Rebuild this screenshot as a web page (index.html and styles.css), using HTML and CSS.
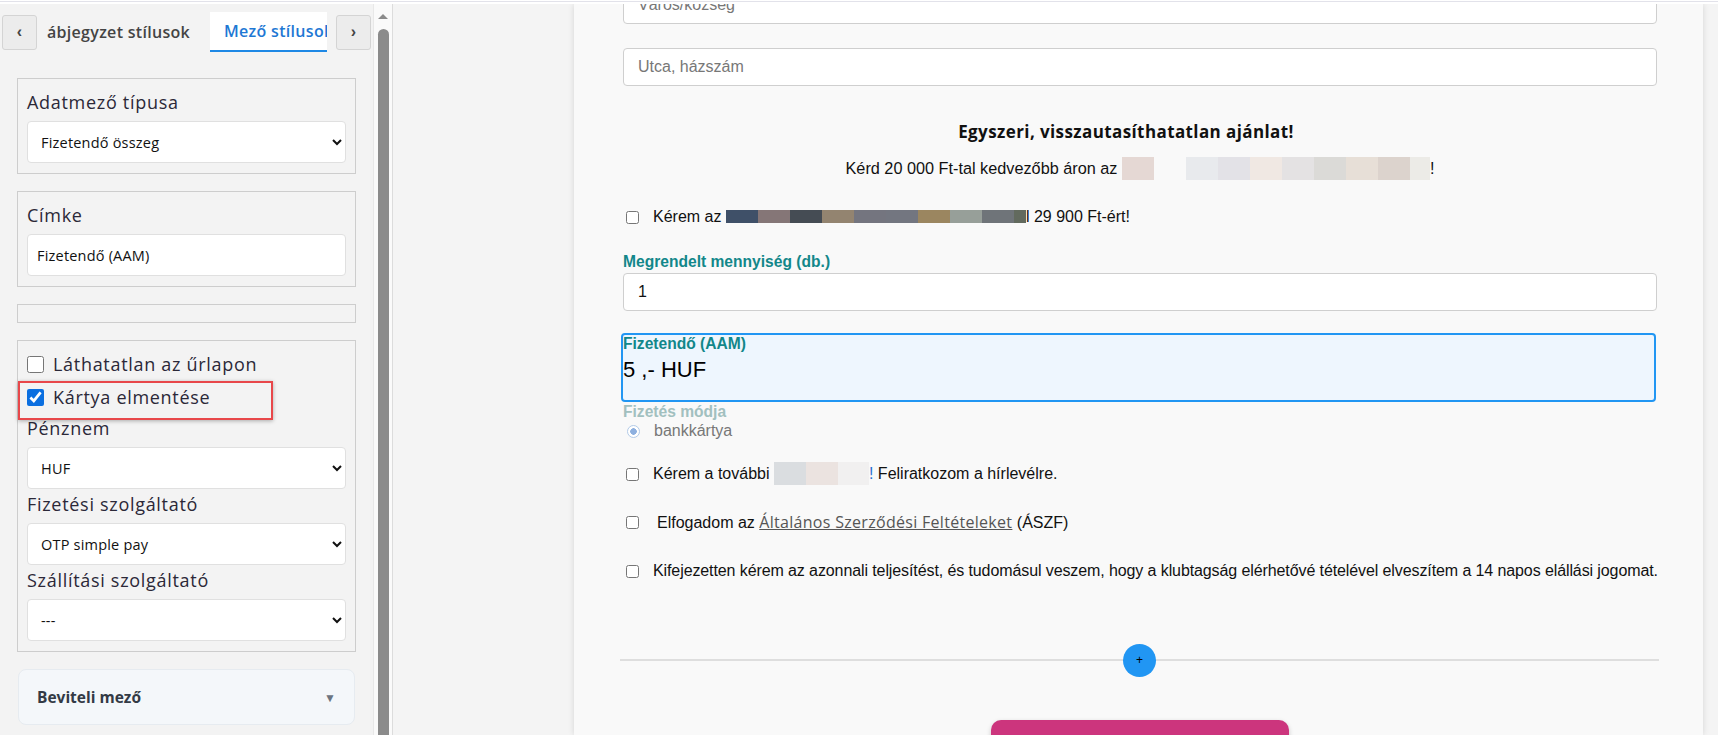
FILE: index.html
```html
<!DOCTYPE html>
<html lang="hu">
<head>
    <meta charset="UTF-8">
    <meta name="viewport" content="width=device-width, initial-scale=1.0">
    <title>Űrlap szerkesztő</title>
    <link rel="stylesheet" href="styles.css">
</head>
<body>

    <div class="topline"></div>

    <div class="app">
        <aside class="sidebar">
            <div class="sidebarInner">
                <div class="tabs">
                    <button class="tabArrow">‹</button>
                    <div class="tabViewport">
                        <div class="tab">ábjegyzet stílusok</div>
                        <div class="tab active">Mező stílusok</div>
                    </div>
                    <button class="tabArrow">›</button>
                </div>

                <div class="group">
                    <label class="groupLabel">Adatmező típusa</label>
                    <select class="control"><option>Fizetendő összeg</option></select>
                </div>

                <div class="group">
                    <label class="groupLabel">Címke</label>
                    <input class="control" type="text" value="Fizetendő (AAM)">
                </div>

                <div class="group empty"></div>

                <div class="group options">
                    <label class="checkRow"><input type="checkbox"> Láthatatlan az űrlapon</label>
                    <label class="checkRow"><input type="checkbox" checked> Kártya elmentése</label>
                    <div class="highlight"></div>

                    <label class="groupLabel">Pénznem</label>
                    <select class="control"><option>HUF</option></select>

                    <label class="groupLabel">Fizetési szolgáltató</label>
                    <select class="control"><option>OTP simple pay</option></select>

                    <label class="groupLabel">Szállítási szolgáltató</label>
                    <select class="control"><option>---</option></select>
                </div>

                <div class="accordion">
                    <span>Beviteli mező</span>
                    <span class="accordionArrow">▼</span>
                </div>
            </div>

            <div class="scrollbar">
                <span class="scrollUp"></span>
                <span class="scrollThumb"></span>
            </div>
        </aside>

        <main class="stage">
            <div class="card">
                <input class="field first" type="text" placeholder="Város/község">
                <input class="field" type="text" placeholder="Utca, házszám">

                <div class="offerTitle">Egyszeri, visszautasíthatatlan ajánlat!</div>
                <div class="offerText">
                    Kérd 20 000 Ft-tal kedvezőbb áron az
                    <span class="blur"><i style="background:#e5d8d4"></i><i style="background:#f9f9f9"></i><i style="background:#e8eaed"></i><i style="background:#e3e2e7"></i><i style="background:#f0e8e3"></i><i style="background:#e4e2e3"></i><i style="background:#dbdad7"></i><i style="background:#e7dfd7"></i><i style="background:#dcd3cd"></i><i style="background:#ecebe7;width:20px"></i></span>!
                </div>

                <label class="checkLine first">
                    <input type="checkbox">
                    <span>Kérem az <span class="blur thin"><i style="background:#3f5068"></i><i style="background:#857677"></i><i style="background:#454c54"></i><i style="background:#938470"></i><i style="background:#74757f"></i><i style="background:#737680"></i><i style="background:#9b8660"></i><i style="background:#979f99"></i><i style="background:#6f7479"></i><i style="background:#626a5e;width:12px"></i></span>l 29 900 Ft-ért!</span>
                </label>

                <div class="fieldLabel">Megrendelt mennyiség (db.)</div>
                <input class="field qty" type="text" value="1">

                <div class="amountBox">
                    <div class="fieldLabel">Fizetendő (AAM)</div>
                    <div class="amount">5 ,- HUF</div>
                </div>

                <div class="fieldLabel muted">Fizetés módja</div>
                <label class="radioLine"><input type="radio" checked> bankkártya</label>

                <label class="checkLine afterRadio">
                    <input type="checkbox">
                    <span>Kérem a további <span class="blur"><i style="background:#dadde0"></i><i style="background:#ebe3e0"></i><i style="background:#f1f0f0;width:31px"></i></span><span class="mark">!</span> Feliratkozom a hírlevélre.</span>
                </label>

                <label class="checkLine">
                    <input type="checkbox">
                    <span class="spaced">Elfogadom az <a href="#">Általános Szerződési Feltételeket</a> (ÁSZF)</span>
                </label>

                <label class="checkLine">
                    <input type="checkbox">
                    <span class="long">Kifejezetten kérem az azonnali teljesítést, és tudomásul veszem, hogy a klubtagság elérhetővé tételével elveszítem a 14 napos elállási jogomat.</span>
                </label>

                <div class="divider">
                    <button class="addButton">+</button>
                </div>

                <button class="submitButton"></button>
            </div>
        </main>
    </div>

</body>
</html>
```

FILE: styles.css
```css
body {
    margin: 0;
    padding: 0;
    background-color: #fff;
    font-family: 'Open Sans', sans-serif;
    height: 735px;
    overflow: hidden;
}

.topline {
    height: 1px;
    margin-top: 1px;
    margin-bottom: 2px;
    background-color: #e2e2ea;
}

.app {
    display: flex;
    height: 731px;
}

/* bal oldali panel */

.sidebar {
    display: flex;
    width: 393px;
    flex-shrink: 0;
    background-color: #f3f3f3;
}

.sidebarInner {
    width: 373px;
    box-sizing: border-box;
    padding: 0 17px;
}

.tabs {
    display: flex;
    align-items: center;
    margin: 8px -15px 26px -15px;
    height: 40px;
}

.tabArrow {
    width: 35px;
    height: 35px;
    padding: 0;
    border: 1px solid #d4d4d4;
    border-radius: 3px;
    background-color: #ececec;
    color: #444;
    font-family: 'Liberation Sans', sans-serif;
    font-size: 16px;
    font-weight: bold;
    flex-shrink: 0;
}

.tabViewport {
    display: flex;
    flex: 1;
    height: 40px;
    overflow: hidden;
    margin-right: 9px;
}

.tab {
    flex-shrink: 0;
    padding: 0 20px 0 10px;
    line-height: 40px;
    font-size: 16px;
    font-weight: 600;
    letter-spacing: 0.3px;
    color: #444;
    white-space: nowrap;
}

.tab.active {
    background-color: #fff;
    color: #1e78d4;
    padding-left: 14px;
    box-sizing: border-box;
    border-bottom: 2px solid #1e88e5;
    line-height: 38px;
}

.group {
    position: relative;
    border: 1px solid #cdcdcd;
    padding: 11px 9px 10px 9px;
    margin-bottom: 17px;
}

.group.empty {
    height: 19px;
    padding: 0;
    box-sizing: border-box;
}

.group.options {
    padding-top: 9px;
}

.groupLabel {
    display: block;
    font-size: 18px;
    letter-spacing: 0.7px;
    line-height: 24px;
    color: #2b2838;
    margin-bottom: 7px;
}

.options .groupLabel {
    margin-top: 3px;
}

.control {
    display: block;
    width: 100%;
    height: 42px;
    box-sizing: border-box;
    border: 1px solid #e0e0e0;
    border-radius: 4px;
    background-color: #fff;
    padding: 0 9px;
    font-family: 'Open Sans', sans-serif;
    font-size: 14.5px;
    letter-spacing: 0.2px;
    color: #111;
}

.checkRow {
    display: flex;
    align-items: center;
    height: 28px;
    font-size: 18px;
    letter-spacing: 0.7px;
    color: #2b2838;
    margin-bottom: 5px;
}

.checkRow input {
    width: 17px;
    height: 17px;
    margin: 0 9px 0 0;
    accent-color: #0b6fe0;
}

.highlight {
    position: absolute;
    left: 0;
    top: 40px;
    width: 255px;
    height: 39px;
    box-sizing: border-box;
    border: 2px solid #e8474a;
    box-shadow: 0 1px 4px rgba(0, 0, 0, 0.3);
}

.accordion {
    display: flex;
    justify-content: space-between;
    align-items: center;
    height: 56px;
    box-sizing: border-box;
    padding: 0 18px 0 18px;
    margin-left: 1px;
    margin-right: 1px;
    border: 1px solid #e6ebf0;
    border-radius: 8px;
    background-color: #f4f7fa;
    font-size: 15.5px;
    font-weight: bold;
    color: #333a45;
}

.accordionArrow {
    font-size: 12px;
    color: #6c7480;
}

.scrollbar {
    display: flex;
    flex-direction: column;
    align-items: center;
    width: 20px;
    box-sizing: border-box;
    border-left: 1px solid #e8e8e8;
    border-right: 1px solid #dcdcdc;
    background-color: #fafafa;
    padding-top: 10px;
}

.scrollUp {
    width: 0;
    height: 0;
    border-left: 5px solid transparent;
    border-right: 5px solid transparent;
    border-bottom: 5px solid #8b8b8b;
}

.scrollThumb {
    flex: 1;
    width: 11px;
    margin-top: 10px;
    border-radius: 6px 6px 0 0;
    background-color: #8b8b8b;
}

/* űrlap előnézet */

.stage {
    flex: 1;
    background-color: #f4f4f4;
    overflow: hidden;
}

.card {
    margin-left: 181px;
    width: 1129px;
    height: 731px;
    box-sizing: border-box;
    padding: 0 46px 0 49px;
    background-color: #f9f9f9;
    box-shadow: 0 0 6px rgba(0, 0, 0, 0.13);
    overflow: hidden;
    font-family: 'Liberation Sans', Arial, sans-serif;
    font-size: 16px;
    color: #111;
}

.field {
    display: block;
    width: 100%;
    height: 38px;
    box-sizing: border-box;
    margin-top: 24px;
    padding: 0 14px;
    border: 1px solid #cfcfcf;
    border-radius: 4px;
    background-color: #fff;
    font-family: 'Liberation Sans', Arial, sans-serif;
    font-size: 16px;
    color: #111;
}

.field::placeholder {
    color: #777;
}

.field.first {
    margin-top: -18px;
}

.offerTitle {
    margin-top: 36px;
    padding-right: 28px;
    line-height: 20px;
    text-align: center;
    font-family: 'Open Sans', sans-serif;
    font-size: 17px;
    letter-spacing: 0.4px;
    font-weight: bold;
    color: #111;
}

.offerText {
    margin-top: 14px;
    line-height: 24px;
    text-align: center;
    font-size: 16.25px;
}

.blur {
    display: inline-flex;
    vertical-align: -6px;
}

.blur i {
    display: block;
    width: 32px;
    height: 23px;
}

.blur.thin {
    vertical-align: -1px;
}

.blur.thin i {
    height: 13px;
}

.mark {
    color: #2a6fd0;
}

.checkLine {
    display: flex;
    align-items: center;
    line-height: 24px;
    margin-top: 24px;
}

.checkLine.first {
    margin-top: 25px;
}

.checkLine.afterRadio {
    margin-top: 21px;
}

.checkLine input {
    width: 13px;
    height: 13px;
    margin: 0 14px 0 3px;
    flex-shrink: 0;
}

.radioLine input {
    appearance: none;
    width: 13px;
    height: 13px;
    margin: 0 14px 0 4px;
    flex-shrink: 0;
    border: 1px solid #b3cbe8;
    border-radius: 50%;
    background: radial-gradient(circle, #8eb0df 0, #8eb0df 3px, #fff 3.5px);
}

.checkLine .spaced {
    padding-left: 4px;
}

.checkLine .long {
    white-space: nowrap;
    letter-spacing: -0.1px;
}

.checkLine a {
    font-family: 'Open Sans', sans-serif;
    font-size: 16px;
    letter-spacing: 0.3px;
    color: #555;
}

.fieldLabel {
    margin-top: 24px;
    line-height: 18px;
    font-size: 15.6px;
    font-weight: bold;
    color: #12878a;
}

.field.qty {
    margin-top: 2px;
}

.amountBox {
    margin-top: 22px;
    height: 69px;
    box-sizing: border-box;
    margin-left: -2px;
    margin-right: 1px;
    border: 2px solid #2196f3;
    border-radius: 4px;
    background-color: #eef6fe;
}

.amountBox .fieldLabel {
    margin-top: 0;
}

.amount {
    margin-top: 4px;
    line-height: 26px;
    font-size: 22px;
    color: #000;
}

.fieldLabel.muted {
    margin-top: 1px;
    color: #a2c0bf;
}

.radioLine {
    display: flex;
    align-items: center;
    line-height: 20px;
    color: #777;
}

.divider {
    display: flex;
    justify-content: center;
    align-items: center;
    height: 34px;
    margin: 60px -2px 0 -3px;
    background: linear-gradient(#dedede, #dedede) center / 100% 2px no-repeat;
}

.addButton {
    width: 33px;
    height: 33px;
    padding: 0;
    border: none;
    border-radius: 50%;
    background-color: #2196f3;
    color: #000;
    font-size: 12px;
    font-family: 'Liberation Sans', sans-serif;
}

.submitButton {
    display: block;
    margin: 43px auto 0 auto;
    width: 298px;
    height: 50px;
    border: none;
    border-radius: 10px;
    background-color: #cc357d;
    box-shadow: 0 2px 5px rgba(0, 0, 0, 0.2);
}
```
